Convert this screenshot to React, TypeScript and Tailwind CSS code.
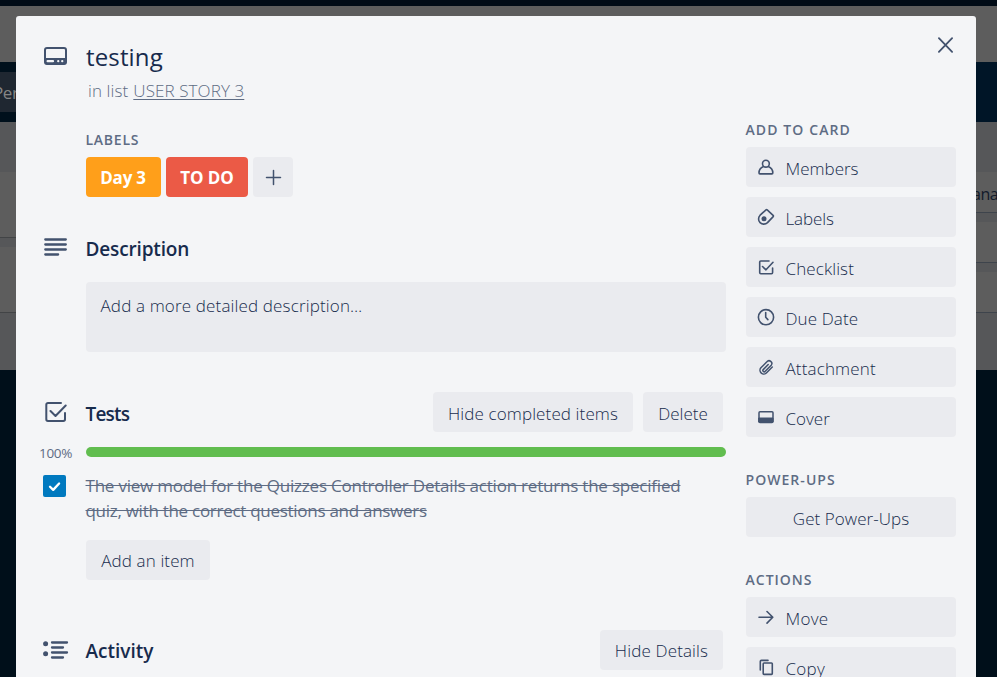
import React from "react";

const SANS = "font-['Open_Sans','Noto_Sans',sans-serif]";

type IconProps = { children: React.ReactNode; className: string; box: string };

function Icon({ children, className, box }: IconProps) {
  return (
    <svg className={`shrink-0 ${className}`} viewBox={box} fill="none" stroke="#42526e" strokeLinecap="round" strokeLinejoin="round">
      {children}
    </svg>
  );
}

function SideHeading({ children, track }: { children: string; track: string }) {
  return <h3 className={`-ml-[0.5px] h-[25px] text-[14px] font-semibold leading-[15px] text-[#5e6c84] ${track}`}>{children}</h3>;
}

function SideButton({ icon, label, track }: { icon: React.ReactNode; label: string; track: string }) {
  return (
    <button className="flex h-10 w-full items-center rounded-[4px] bg-[#eaebef] pl-[9.5px] text-left">
      <span className="flex h-5 w-5 items-center justify-center">{icon}</span>
      <span className={`ml-[10px] mt-[3px] text-[17px] font-light leading-5 ${track}`}>{label}</span>
    </button>
  );
}

function GrayButton({ label, className }: { label: string; className: string }) {
  return (
    <button className={`flex h-10 shrink-0 items-center justify-center whitespace-nowrap rounded-[4px] bg-[#eaebef] text-[17px] font-light ${className}`}>
      {label}
    </button>
  );
}

const small = "h-5 w-5";

export default function App() {
  return (
    <div className={`relative h-[677px] w-[997px] overflow-hidden bg-[#000f1a] text-[#172b4d] ${SANS}`}>
      <div className="flex h-full flex-col">
        <div className="h-[6px] bg-[#000b16]" />
        <div className="h-14 bg-[#5d5d5d]" />
        <div className="flex h-[60px] items-center justify-between bg-[#001527]">
          <div className="flex h-full w-4 items-center bg-[#00101c]">
            <div className="flex h-10 w-4 items-center overflow-hidden bg-[#1f2731]">
              <span className="-ml-[7px] mt-[2px] text-[17px] tracking-[-0.4px] text-[#858585]">Per</span>
            </div>
          </div>
        </div>
        <div className="flex h-[248px] justify-between bg-[#565759]">
          <div className="w-4 pt-[50px]">
            <div className="h-[66px] border-b border-[#424446] bg-[#5d5d5d]" />
            <div className="mt-[9px] h-[66px] border-b border-[#424446] bg-[#5d5d5d]" />
          </div>
          <div className="w-[21px] pt-[50px]">
            <div className="flex h-[41px] items-center overflow-hidden border-b border-[#3e444c] bg-[#5d5d5d]">
              <span className="-ml-[4px] mt-[3px] text-[16px] tracking-[-0.5px] text-[#111a2a]">ana</span>
            </div>
            <div className="mt-[9px] h-[41px] border-b border-[#3e444c] bg-[#5d5d5d]" />
            <div className="mt-[9px] h-[41px] border-b border-[#3e444c] bg-[#5d5d5d]" />
          </div>
        </div>
      </div>

      <main className="absolute left-4 top-4 flex h-[700px] w-[960px] rounded-[3px] bg-[#f4f5f7]">
        <button aria-label="Close" className="absolute right-5 top-[19px] h-5 w-5">
          <Icon className={small} box="0 0 20 20"><path d="M2.9 3.2 16.1 16.8M16.1 3.2 2.9 16.8" strokeWidth="1.8" /></Icon>
        </button>

        <section className="flex w-[710px] flex-col pl-[27px]">
          <header className="flex h-[113px] pt-[24px]">
            <Icon className="mt-[4px] h-6 w-6" box="0 0 24 24">
              <rect x="2" y="4" width="21" height="16" rx="2" strokeWidth="2" />
              <path d="M2 14.5h21V18a2 2 0 0 1-2 2H4a2 2 0 0 1-2-2z" fill="#42526e" strokeWidth="1" />
              <path d="M4.6 17.2h5.4M15.2 17.2h.1M19.2 17.2h.1" stroke="#f4f5f7" strokeWidth="2.2" />
            </Icon>
            <div className="ml-[19px]">
              <h1 className="h-[37px] text-[24px] font-medium leading-[34px] tracking-[0.15px]">testing</h1>
              <p className="ml-[2px] text-[17px] font-light leading-[27px] tracking-[0.1px] text-[#5e6c84]">
                in list <span className="ml-[0.5px] underline underline-offset-[2px]">USER STORY 3</span>
              </p>
            </div>
          </header>

          <div className="h-[103px] pl-[43px] pt-[3px]">
            <SideHeading track="tracking-[0.75px]">LABELS</SideHeading>
            <div className="flex h-10 gap-[5px] text-[17px] font-bold text-white">
              <span className="flex w-[75px] items-center justify-center rounded-[4px] bg-[#ff9f1a] pr-px pt-[2px] tracking-[-0.25px]">Day 3</span>
              <span className="flex w-[82px] items-center justify-center rounded-[4px] bg-[#eb5a46] pt-[2px] tracking-[-0.1px]">TO DO</span>
              <button aria-label="Add label" className="flex w-10 items-center justify-center rounded-[4px] bg-[#eaebef]">
                <Icon className={small} box="0 0 20 20"><path d="M10.5 3.5v14M3.5 10.5h14" strokeWidth="1.5" /></Icon>
              </button>
            </div>
          </div>

          <div className="flex h-[50px] items-start">
            <Icon className="mt-[3px] h-6 w-6" box="0 0 24 24"><path d="M2.3 4.5h20.5M2.3 9.5h20.5M2.3 14.5h20.5M2.3 19.5h12.8" strokeWidth="2.3" /></Icon>
            <h2 className="ml-[18.5px] text-[19px] font-semibold leading-[34px] tracking-[-0.15px]">Description</h2>
          </div>
          <div className="ml-[43px] h-[70px] w-[640px] rounded-[4px] bg-[#eaebef] px-[14.5px] pt-[11px] text-[17px] font-light leading-[25px] tracking-[0.15px]">
            Add a more detailed description…
          </div>

          <div className="mt-[40px] flex h-[55px] items-start">
            <Icon className="mt-[8px] h-6 w-6" box="0 0 24 24">
              <path d="M18 3H5a1.7 1.7 0 0 0-1.7 1.7v14.6A1.7 1.7 0 0 0 5 21h15.3a1.7 1.7 0 0 0 1.7-1.7V13M7.5 11l5 5L22.7 5.5" strokeWidth="2" />
            </Icon>
            <h2 className="ml-[18.5px] mt-[5px] flex-1 text-[19px] font-semibold leading-[34px] tracking-[-0.8px]">Tests</h2>
            <div className="mr-[3px] flex gap-[10px]">
              <GrayButton label="Hide completed items" className="w-[200px] pt-[3px] tracking-[0.12px]" />
              <GrayButton label="Delete" className="w-20 pt-[3px]" />
            </div>
          </div>
          <div className="flex h-[10px] items-center">
            <span className="-ml-1 mt-[2px] w-[47px] text-[13.5px] tracking-[-0.3px] text-[#5e6c84]">100%</span>
            <div className="h-[10px] w-[640px] rounded-full bg-[#61bd4f]" />
          </div>
          <div className="mt-[16px] flex h-[67px] items-start">
            <span className="mt-[2px] flex h-[22px] w-[23px] shrink-0 items-center justify-center rounded-[2px] bg-[#0079bf]">
              <svg className="h-4 w-4" viewBox="0 0 16 16" fill="none" stroke="white" strokeWidth="2.3" strokeLinecap="round" strokeLinejoin="round"><path d="m3 8.7 3.2 3.2 5.9-6.4" /></svg>
            </span>
            <p className="ml-[19.5px] whitespace-nowrap text-[17px] leading-[25px] text-[#5e6c84]">
              <span className="tracking-[-0.21px] line-through">The view model for the Quizzes Controller Details action returns the specified</span>
              <br />
              <span className="tracking-[-0.28px] line-through">quiz, with the correct questions and answers</span>
            </p>
          </div>
          <GrayButton label="Add an item" className="ml-[43px] w-[124px] pt-px tracking-[0.12px]" />
          <div className="mt-[50px] flex h-10 items-start">
            <Icon className="h-10 w-[26px]" box="0 0 26 40">
              <path d="M9 12.5h15M9 17.5h11M9 22.5h15M9 27.5h11" strokeWidth="2.3" />
              <circle cx="2.6" cy="13.7" r="2.5" fill="#42526e" stroke="none" /><circle cx="2.6" cy="23.7" r="2.5" fill="#42526e" stroke="none" />
            </Icon>
            <h2 className="ml-[16.5px] mt-[4px] flex-1 text-[19px] font-semibold leading-[34px]">Activity</h2>
            <GrayButton label="Hide Details" className="mr-[3px] w-[123px] pt-px tracking-[0.15px]" />
          </div>
        </section>

        <aside className="ml-5 flex w-[210px] flex-col pt-[106px]">
          <SideHeading track="tracking-[1.1px]">ADD TO CARD</SideHeading>
          <div className="flex flex-col gap-[10px]">
            <SideButton label="Members" track="" icon={<Icon className={small} box="0 0 20 20"><circle cx="9.9" cy="6.7" r="3.4" strokeWidth="1.6" /><path d="M7.5 9.5C4.3 10.7 3 12.7 3 16q0 .9.9.9h12q.9 0 .9-.9c0-3.3-1.3-5.3-4.500-6.500" strokeWidth="1.6" /></Icon>} />
            <SideButton label="Labels" track="tracking-[-0.1px]" icon={<Icon className={small} box="0 0 20 20"><path d="m11.2 2.8 5.9 5.500q.6.6.1 1.300l-5.700 6a5.200 5.200 0 0 1-7.400-7.400l5.900-5.400q.6-.5 1.200 0z" strokeWidth="1.6" /><circle cx="8" cy="11.8" r="2.500" fill="#42526e" stroke="none" /></Icon>} />
            <SideButton label="Checklist" track="tracking-[0.1px]" icon={<Icon className={small} box="0 0 20 20"><path d="M13 4H4.8A1.1 1.1 0 0 0 3.7 5.1v10.5a1.1 1.1 0 0 0 1.1 1.1h10.7a1.1 1.1 0 0 0 1.1-1.1V11M6.5 9.5l3.5 3.3 7-7.5" strokeWidth="1.6" /></Icon>} />
            <SideButton label="Due Date" track="tracking-[0.1px]" icon={<Icon className={small} box="0 0 20 20"><circle cx="10" cy="10.2" r="7.6" strokeWidth="1.6" /><path d="M9.7 5.500v4.700l2.200 2.400" strokeWidth="1.6" /></Icon>} />
            <SideButton label="Attachment" track="tracking-[0.15px]" icon={<Icon className={small} box="0 0 20 20"><path d="m16.3 10-5.700 5.700a3.700 3.700 0 0 1-5.700-4.900l6-6a2.700 2.700 0 0 1 4.300 3.400l-6 6.100a1.300 1.300 0 0 1-2-1.700l5-5.100" strokeWidth="1.5" /></Icon>} />
            <SideButton label="Cover" track="" icon={<Icon className={small} box="0 0 20 20"><rect x="3" y="4.8" width="14" height="10.6" rx="1" strokeWidth="1.5" /><path d="M3 11h14v4H3z" fill="#42526e" strokeWidth="1" /></Icon>} />
          </div>
          <div className="mt-[35px]">
            <SideHeading track="tracking-[1.05px]">POWER-UPS</SideHeading>
            <GrayButton label="Get Power-Ups" className="w-full pt-[3px] tracking-[0.06px]" />
          </div>
          <div className="mt-[35px]">
            <SideHeading track="tracking-[1px]">ACTIONS</SideHeading>
            <div className="flex flex-col gap-[10px]">
              <SideButton label="Move" track="tracking-[0.3px]" icon={<Icon className={small} box="0 0 20 20"><path d="M3 10.3h13.8M11 4.5l5.8 5.8-5.8 5.8" strokeWidth="1.6" /></Icon>} />
              <SideButton label="Copy" track="tracking-[0.3px]" icon={<Icon className={small} box="0 0 20 20"><path d="M4.3 13V4.500q0-1.100 1.100-1.100H12M8 6h7.500q.8 0 .8.8v9.800q0 .8-.8.8H8q-.8 0-.8-.8V6.800q0-.8.8-.8z" strokeWidth="1.6" /></Icon>} />
            </div>
          </div>
        </aside>
      </main>
    </div>
  );
}
